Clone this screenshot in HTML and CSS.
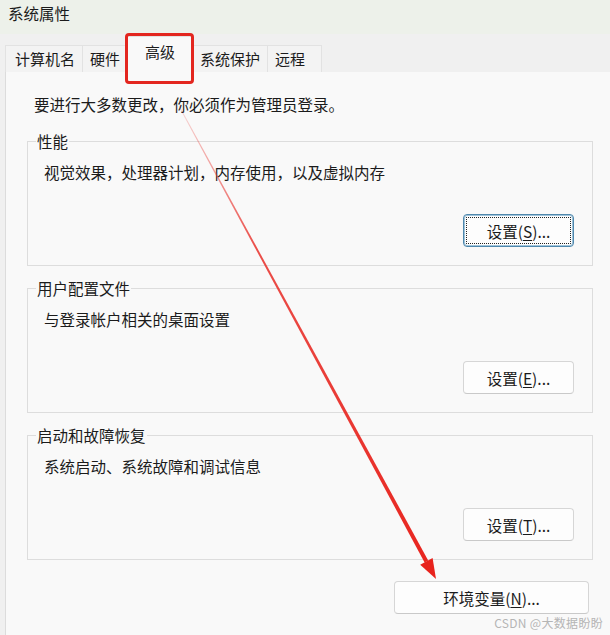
FILE: index.html
```html
<!DOCTYPE html>
<html lang="zh-CN">
<head>
    <meta charset="UTF-8">
    <meta name="viewport" content="width=device-width, initial-scale=1.0">
    <title>系统属性</title>
    <link rel="stylesheet" href="styles.css">
</head>
<body>
    <div class="window">
        <div class="titlebar">系统属性</div>
        <div class="tabs">
            <div class="tab first">计算机名</div>
            <div class="tab">硬件</div>
            <div class="tab active">高级</div>
            <div class="tab">系统保护</div>
            <div class="tab last">远程</div>
        </div>
        <div class="panel">
            <p class="notice">要进行大多数更改，你必须作为管理员登录。</p>

            <fieldset class="group">
                <legend>性能</legend>
                <p class="desc">视觉效果，处理器计划，内存使用，以及虚拟内存</p>
                <div class="actions">
                    <button class="btn focus">设置(<u>S</u>)...</button>
                </div>
            </fieldset>

            <fieldset class="group">
                <legend>用户配置文件</legend>
                <p class="desc">与登录帐户相关的桌面设置</p>
                <div class="actions">
                    <button class="btn">设置(<u>E</u>)...</button>
                </div>
            </fieldset>

            <fieldset class="group">
                <legend>启动和故障恢复</legend>
                <p class="desc">系统启动、系统故障和调试信息</p>
                <div class="actions">
                    <button class="btn">设置(<u>T</u>)...</button>
                </div>
            </fieldset>

            <div class="env-row">
                <button class="btn wide">环境变量(<u>N</u>)...</button>
            </div>
        </div>
    </div>

    <!-- 标注：红框 + 箭头 -->
    <div class="mark-box"></div>
    <svg class="arrow" width="610" height="635" viewBox="0 0 610 635">
        <defs>
            <linearGradient id="fade" gradientUnits="userSpaceOnUse" x1="179" y1="106" x2="436" y2="579">
                <stop offset="0" stop-color="#e8302a" stop-opacity="0.15"/>
                <stop offset="0.3" stop-color="#e8302a" stop-opacity="0.85"/>
                <stop offset="1" stop-color="#e8231d" stop-opacity="1"/>
            </linearGradient>
        </defs>
        <polygon points="179.4,105.8 178.6,106.2 424.6,562.4 428.2,560.4" fill="url(#fade)"/>
        <polygon points="436,579 432.6,558.1 420.2,564.7" fill="#e8231d"/>
    </svg>
    <div class="watermark">CSDN @大数据盼盼</div>
</body>
</html>
```

FILE: styles.css
```css
* {
    padding: 0px;
    margin: 0px;
    box-sizing: border-box;
}

body {
    position: relative;
    width: 610px;
    height: 635px;
    overflow: hidden;
    background-color: #f0f0f0;
    font-family: "Noto Sans CJK SC", sans-serif;
    font-size: 15.5px;
    color: #1b1b1b;
}

.window {
    height: 635px;
    display: flex;
    flex-direction: column;
}

/* 标题栏 */
.titlebar {
    height: 34px;
    padding: 3px 0 0 8px;
    line-height: 20px;
    background-color: #edf1ea;
}

/* 选项卡 */
.tabs {
    height: 38px;
    padding-left: 5px;
    display: flex;
    align-items: flex-end;
    font-size: 15px;
    background-color: #f0f0f0;
}

.tab {
    height: 27px;
    padding: 0 7px;
    line-height: 26px;
    background-color: #f3f3f3;
    border-top: 1px solid #e2e2e2;
    border-right: 1px solid #e2e2e2;
}

.tab.first {
    padding-left: 9px;
    border-left: 1px solid #e2e2e2;
}

.tab.last {
    padding-right: 16px;
}

.tab.active {
    height: 36px;
    margin-left: -1px;
    padding: 0 17px;
    line-height: 30px;
    border-left: 1px solid #e2e2e2;
    background-color: #f9f9f9;
}

/* 内容面板 */
.panel {
    flex: 1;
    margin-left: 5px;
    padding: 22px 0 0 21px;
    border-left: 1px solid #dcdcdc;
    background-color: #f9f9f9;
}

.notice {
    padding-left: 7px;
    line-height: 20px;
}

.group {
    width: 566px;
    margin-top: 17px;
    padding: 11px 18px 18px 16px;
    border: 1px solid #dddddd;
}

.group + .group {
    margin-top: 12px;
}

.group legend {
    margin-left: -8px;
    padding: 0 1px;
    line-height: 20px;
}

.desc {
    line-height: 20px;
}

.actions {
    margin-top: 32px;
    display: flex;
    justify-content: flex-end;
}

.btn {
    width: 111px;
    height: 33px;
    font-family: "Noto Sans CJK SC", sans-serif;
    font-size: 15.5px;
    color: #1b1b1b;
    background-color: #fdfdfd;
    border: 1px solid #d6d6d6;
    border-bottom-color: #c9c9c9;
    border-radius: 4px;
    outline: none;
    cursor: pointer;
}

.btn u {
    text-underline-offset: 2px;
}

.btn.focus {
    border: 1px solid #4f88ad;
    box-shadow: inset 0 0 0 1px #9ec3da;
    outline: 1px dotted #222222;
    outline-offset: -4px;
}

.env-row {
    width: 562px;
    margin-top: 21px;
    display: flex;
    justify-content: flex-end;
}

.btn.wide {
    width: 195px;
}

/* 标注 */
.mark-box {
    position: absolute;
    left: 125px;
    top: 33px;
    width: 69px;
    height: 51px;
    border: 3px solid #e3261f;
    border-radius: 4px;
}

.arrow {
    position: absolute;
    left: 0;
    top: 0;
    pointer-events: none;
}

.watermark {
    position: absolute;
    right: 7px;
    bottom: 4px;
    font-size: 12px;
    line-height: 16px;
    color: #b5b5b5;
    letter-spacing: 0.3px;
}
```
